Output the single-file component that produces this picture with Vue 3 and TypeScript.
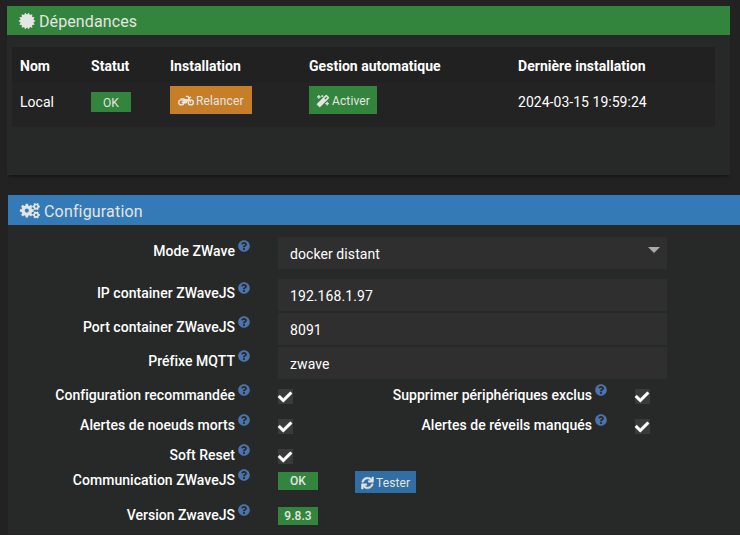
<script setup lang="ts">
interface Toggle { label: string; second?: string }

const columns = ['Nom', 'Statut', 'Installation', 'Gestion automatique', 'Dernière installation']
const fields: { label: string; value: string; kind: string }[] = [
  { label: 'Mode ZWave', value: 'docker distant', kind: 'select' },
  { label: 'IP container ZWaveJS', value: '192.168.1.97', kind: 'input' },
  { label: 'Port container ZWaveJS', value: '8091', kind: 'input' },
  { label: 'Préfixe MQTT', value: 'zwave', kind: 'input' },
]
const toggles: Toggle[] = [
  { label: 'Configuration recommandée', second: 'Supprimer périphériques exclus' },
  { label: 'Alertes de noeuds morts', second: 'Alertes de réveils manqués' },
  { label: 'Soft Reset' },
]

const help = 'M504 256c0 136.997-111.043 248-248 248S8 392.997 8 256C8 119.083 119.043 8 256 8s248 111.083 248 248zM262.655 90c-54.497 0-89.255 22.957-116.549 63.758-3.536 5.286-2.353 12.415 2.715 16.258l34.699 26.31c5.205 3.947 12.621 3.008 16.665-2.122 17.864-22.658 30.113-35.797 57.303-35.797 20.429 0 45.698 13.148 45.698 32.958 0 14.976-12.363 22.667-32.534 33.976C247.128 238.528 216 254.941 216 296v4c0 6.627 5.373 12 12 12h56c6.627 0 12-5.373 12-12v-1.333c0-28.462 83.186-29.647 83.186-106.667 0-58.002-60.165-102-116.531-102zM256 338c-25.365 0-46 20.635-46 46 0 25.364 20.635 46 46 46s46-20.636 46-46c0-25.365-20.635-46-46-46z'
const check = 'M173.898 439.404l-166.4-166.4c-9.997-9.997-9.997-26.206 0-36.204l36.203-36.204c9.997-9.998 26.207-9.998 36.204 0L192 312.69 432.095 72.596c9.997-9.997 26.207-9.997 36.204 0l36.203 36.204c9.997 9.997 9.997 26.206 0 36.204l-294.4 294.401c-9.998 9.997-26.207 9.997-36.204-.001z'
const sync = 'M440.65 12.57l4 82.77A247.16 247.16 0 0 0 255.83 8C134.73 8 33.91 94.92 12.29 209.82A12 12 0 0 0 24.09 224h49.05a12 12 0 0 0 11.67-9.26 175.91 175.91 0 0 1 317-56.94l-101.46-4.86a12 12 0 0 0-12.57 12v47.41a12 12 0 0 0 12 12H500a12 12 0 0 0 12-12V12a12 12 0 0 0-12-12h-47.37a12 12 0 0 0-11.98 12.57zM255.83 432a175.61 175.61 0 0 1-146-77.8l101.8 4.87a12 12 0 0 0 12.57-12v-47.4a12 12 0 0 0-12-12H12a12 12 0 0 0-12 12V500a12 12 0 0 0 12 12h47.35a12 12 0 0 0 12-12.6l-4.15-82.57A247.17 247.17 0 0 0 255.83 504c121.11 0 221.93-86.92 243.55-201.82a12 12 0 0 0-11.8-14.18h-49.05a12 12 0 0 0-11.67 9.26A175.86 175.86 0 0 1 255.83 432z'
const magic = 'M224 96l16-32 32-16-32-16-16-32-16 32-32 16 32 16 16 32zM80 160l26.66-53.33L160 80l-53.34-26.67L80 0 53.34 53.33 0 80l53.34 26.67L80 160zm352 128l-26.66 53.33L352 368l53.34 26.67L432 448l26.66-53.33L512 368l-53.34-26.67L432 288zm70.62-193.77L417.77 9.38C411.53 3.12 403.34 0 395.15 0c-8.19 0-16.38 3.12-22.63 9.38L9.38 372.52c-12.5 12.5-12.5 32.76 0 45.25l84.85 84.85c6.25 6.25 14.44 9.37 22.62 9.37 8.19 0 16.38-3.12 22.63-9.37l363.14-363.15c12.5-12.48 12.5-32.75 0-45.24zM359.45 203.46l-50.91-50.91 86.6-86.6 50.91 50.91-86.6 86.6z'

/* Star outline alternating between two radii */
function burst(c: number, outer: number, inner: number, teeth: number): string {
  const pts: string[] = []
  for (let i = 0; i < teeth * 2; i++) {
    const r = i % 2 ? inner : outer
    const a = (Math.PI * i) / teeth + Math.PI / teeth
    pts.push(`${(c + r * Math.sin(a)).toFixed(2)},${(c - r * Math.cos(a)).toFixed(2)}`)
  }
  return pts.join(' ')
}

/* Gear outline with square teeth and a round hole */
function gear(cx: number, cy: number, outer: number, inner: number, hole: number, teeth: number, turn: number): string {
  let d = ''
  for (let i = 0; i < teeth; i++) {
    const base = turn + (2 * Math.PI * i) / teeth
    const s = Math.PI / teeth
    const pts: [number, number][] = [[inner, -s * 0.65], [outer, -s * 0.45], [outer, s * 0.45], [inner, s * 0.65]]
    for (const [r, o] of pts) {
      d += `${d ? 'L' : 'M'}${(cx + r * Math.sin(base + o)).toFixed(2)} ${(cy - r * Math.cos(base + o)).toFixed(2)}`
    }
  }
  return `${d}ZM${cx - hole} ${cy}a${hole} ${hole} 0 1 0 ${hole * 2} 0a${hole} ${hole} 0 1 0 ${-hole * 2} 0Z`
}
const gears = gear(7, 7.8, 7.2, 5.5, 2.1, 8, 0) + gear(16.6, 3.6, 3.8, 3, 1.2, 6, Math.PI / 6) + gear(16.6, 12.2, 3.8, 3, 1.2, 6, Math.PI / 6)
</script>

<template>
  <main class="page">
    <section class="panel deps">
      <h3 class="heading success">
        <svg class="i-cert" viewBox="0 0 16 16"><polygon :points="burst(8, 8.5, 6.6, 14)" /></svg>
        <span>Dépendances</span>
      </h3>
      <div class="table">
        <div class="row head"><span v-for="c in columns" :key="c">{{ c }}</span></div>
        <div class="row data">
          <span>Local</span>
          <span><span class="tag status">OK</span></span>
          <span>
            <button class="btn warning">
              <svg class="i-moto" viewBox="0 0 16 12">
                <g fill="none" stroke="currentColor">
                  <circle cx="3.2" cy="7.4" r="2.5" stroke-width="1.4" />
                  <circle cx="12.8" cy="7.4" r="2.5" stroke-width="1.4" />
                  <path d="M7.8 1.4h2.2l2.8 6M10.8 3.2l2.2-1.5M2.4 3.8h3.4l1.5 1H10M3.6 7.5h3.6L10.6 4" stroke-width="1.3" />
                </g>
                <path d="M5 3.6l2 .6h3.6L8.4 8.4H6.3z" />
              </svg>
              <span>Relancer</span>
            </button>
          </span>
          <span>
            <button class="btn success">
              <svg class="i-magic" viewBox="0 0 512 512"><path :d="magic" /></svg>
              <span>Activer</span>
            </button>
          </span>
          <span>2024-03-15 19:59:24</span>
        </div>
      </div>
    </section>

    <section class="panel config">
      <h3 class="heading primary">
        <svg class="i-gears" viewBox="0 0 20.5 16.4"><path fill-rule="evenodd" :d="gears" /></svg>
        <span>Configuration</span>
      </h3>
      <div class="form">
        <div v-for="f in fields" :key="f.label" class="line" :class="f.kind">
          <label class="label">{{ f.label }}<svg class="i-help" viewBox="0 0 512 512"><path :d="help" /></svg></label>
          <div class="control"><span>{{ f.value }}</span><i v-if="f.kind === 'select'" class="caret"></i></div>
        </div>
        <div v-for="t in toggles" :key="t.label" class="line toggle">
          <label class="label">{{ t.label }}<svg class="i-help" viewBox="0 0 512 512"><path :d="help" /></svg></label>
          <span class="box"><svg viewBox="0 0 512 512"><path :d="check" /></svg></span>
          <template v-if="t.second">
            <label class="label">{{ t.second }}<svg class="i-help" viewBox="0 0 512 512"><path :d="help" /></svg></label>
            <span class="box"><svg viewBox="0 0 512 512"><path :d="check" /></svg></span>
          </template>
        </div>
        <div class="line info">
          <label class="label">Communication ZWaveJS<svg class="i-help" viewBox="0 0 512 512"><path :d="help" /></svg></label>
          <span class="tag strong">OK</span>
          <button class="btn small">
            <svg class="i-sync" viewBox="0 0 512 512"><path :d="sync" /></svg>
            <span>Tester</span>
          </button>
        </div>
        <div class="line info">
          <label class="label">Version ZwaveJS<svg class="i-help" viewBox="0 0 512 512"><path :d="help" /></svg></label>
          <span class="tag strong">9.8.3</span>
        </div>
      </div>
    </section>
  </main>
</template>

<style>
body { margin: 0; background: #222222; overflow: hidden; }
</style>

<style scoped>
* { box-sizing: border-box; }
.page { width: 740px; height: 535px; padding-top: 6px; overflow: hidden; background: #222222; color: #fff; font: 400 14px/20px Roboto, "Liberation Sans", sans-serif; letter-spacing: .03px; }
svg { display: block; flex: none; fill: currentColor; overflow: visible; }
.panel { background: #272928; }
.deps { width: 723px; height: 169px; margin-left: 7px; box-shadow: 0 3px 3px -2px rgba(0, 0, 0, .5); }
.config { width: 740px; height: 339px; margin: 20px 0 0 8px; }
.heading { display: flex; align-items: center; height: 29px; margin: 0; padding: 2px 12px 0; color: #e5e5e5; font-size: 16px; font-weight: 400; letter-spacing: .1px; }
.heading svg { margin-top: -1px; }
.config .heading { height: 30px; padding-top: 3px; letter-spacing: .17px; }
.success { background: #33843c; }
.warning { background: #c67e28; }
.primary { background: #337ab7; }
.i-cert { width: 16px; height: 16px; margin-right: 4px; }
.i-gears { width: 20px; height: 16px; margin-right: 4px; }
.table { width: 703px; height: 80px; margin: 12px 0 0 5px; background: #232323; }
.row { display: grid; grid-template-columns: 71px 79px 139px 209px 1fr; align-items: center; padding-left: 8px; }
.head { height: 36px; padding-top: 1px; background: #212121; font-weight: 700; }
.data { height: 38px; }
.tag { display: flex; align-items: center; justify-content: center; width: 40px; background: #33843c; color: #e5e5e5; font-size: 12px; line-height: 14px; }
.status { height: 20px; padding-top: 1px; }
.strong { height: 18px; font-weight: 500; }
.btn { display: flex; align-items: center; height: 28px; border: 0; padding: 1px 8px 0; color: #e5e5e5; font: 400 12px/18px Roboto, "Liberation Sans", sans-serif; letter-spacing: .13px; }
.row .btn { margin-top: -4px; }
.row .warning { width: 82px; }
.row .btn.success { width: 68px; }
.i-moto { width: 16px; height: 12px; margin-right: 2px; }
.i-magic { width: 12px; height: 12px; margin-right: 3px; stroke: currentColor; stroke-width: 20; }
.form { padding-top: 12px; }
.line { display: flex; align-items: flex-start; height: 34px; }
.line.select { height: 42px; }
.line.input:nth-child(4) { height: 33px; }
.label { display: flex; justify-content: flex-end; width: 242px; height: 20px; margin: 4px 28px 0 0; font-weight: 500; white-space: nowrap; }
.i-help { width: 12px; height: 12px; margin: -1.5px 0 0 3px; color: #4b74ad; }
.control { display: flex; align-items: center; justify-content: space-between; width: 389px; height: 32px; padding: 2px 7px 0 12px; background: #2f2f2f; letter-spacing: .08px; }
.caret { margin-top: -9px; border: 6px solid transparent; border-top-color: #aaa; border-bottom: 0; }
.line.toggle { height: 30px; }
.toggle .label { margin-top: 5px; }
.box { width: 15px; height: 15px; margin-top: 9px; background: #3a3a3a; }
.box svg { width: 14px; height: 14px; margin-top: .5px; stroke: currentColor; stroke-width: 12; }
.box + .label { width: 314px; }
.line.info { height: 35px; }
.info .label { margin-top: 0; }
.info .tag { margin-top: 2px; }
.btn.small { width: 61px; height: 22px; margin: 1px 0 0 37px; padding: 1px 6px 0; background: #316ea3; }
.i-sync { width: 13px; height: 12px; margin-right: 2px; stroke: currentColor; stroke-width: 20; }
</style>
